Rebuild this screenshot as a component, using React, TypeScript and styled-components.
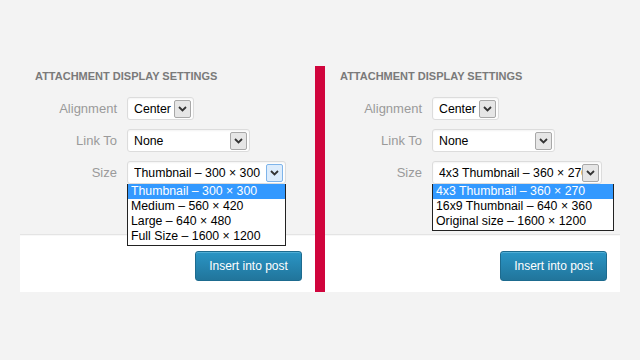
import React from 'react';
import styled, { createGlobalStyle } from 'styled-components';

const GlobalStyle = createGlobalStyle`
  html, body {
    margin: 0;
    padding: 0;
    background: #f3f3f3;
    font-family: Arial, "Liberation Sans", sans-serif;
  }
`;

const Page = styled.div`
  width: 640px;
  height: 360px;
  background: #f3f3f3;
  padding: 66px 20px 0;
  box-sizing: border-box;
`;

const Columns = styled.div`
  display: flex;
  align-items: stretch;
`;

const Panel = styled.section`
  width: 295px;
  display: flex;
  flex-direction: column;
`;

const Divider = styled.div`
  width: 10px;
  background: #d0043c;
`;

const Settings = styled.div`
  height: 168px;
  box-sizing: border-box;
  padding: 4px 0 0 15px;
  position: relative;
  z-index: 2;
`;

const Heading = styled.h3`
  margin: 0 0 14px;
  font-size: 11px;
  line-height: 13px;
  font-weight: bold;
  color: #7a7a7a;
  text-transform: uppercase;
`;

const Rows = styled.div`
  display: flex;
  flex-direction: column;
  gap: 9px;
`;

const Row = styled.div`
  display: flex;
  align-items: center;
  gap: 10px;
`;

const Label = styled.label`
  width: 82px;
  text-align: right;
  font-size: 13px;
  color: #9a9a9a;
`;

const SelectWrap = styled.div`
  position: relative;
`;

const Select = styled.div<{ $width: number }>`
  width: ${p => p.$width}px;
  height: 23px;
  box-sizing: border-box;
  background: #fff;
  border: 1px solid #dcdcdc;
  border-radius: 3px;
  box-shadow: inset 0 1px 2px rgba(0, 0, 0, 0.05);
  display: flex;
  align-items: center;
  padding: 0 2px 0 6px;
  font-size: 12.3px;
  color: #000;
  overflow: hidden;
`;

const Value = styled.span`
  flex: 1;
  min-width: 0;
  white-space: nowrap;
  overflow: hidden;
  text-overflow: clip;
`;

const ArrowBox = styled.span<{ $active?: boolean }>`
  flex: none;
  width: 17px;
  height: 18px;
  box-sizing: border-box;
  display: flex;
  align-items: center;
  justify-content: center;
  border: 1px solid ${p => (p.$active ? '#7eb4ea' : '#a8a8a8')};
  background: ${p => (p.$active ? '#dcecfc' : '#e6e6e6')};
  border-radius: 2px;
`;

const List = styled.ul<{ $width: number }>`
  position: absolute;
  top: 23px;
  left: 0;
  width: ${p => p.$width}px;
  box-sizing: border-box;
  margin: 0;
  padding: 0 0 1px;
  list-style: none;
  background: #fff;
  border: 1px solid #222;
  border-top: none;
`;

const Option = styled.li<{ $selected?: boolean }>`
  height: 15px;
  line-height: 15px;
  padding: 0 3px;
  font-size: 12.3px;
  white-space: nowrap;
  background: ${p => (p.$selected ? '#3399ff' : '#fff')};
  color: ${p => (p.$selected ? '#fff' : '#000')};
`;

const Footer = styled.div`
  height: 58px;
  background: #fff;
  border-top: 1px solid #e4e4e4;
  box-shadow: inset 0 1px 1px rgba(0, 0, 0, 0.03);
  display: flex;
  justify-content: flex-end;
  align-items: flex-start;
  padding: 16px 13px 0 0;
  box-sizing: border-box;
`;

const Button = styled.button`
  width: 107px;
  height: 30px;
  border: 1px solid #1d6b8f;
  border-radius: 3px;
  background: linear-gradient(to bottom, #2a95c5, #21759b);
  color: #fff;
  font-family: Arial, "Liberation Sans", sans-serif;
  font-size: 12px;
  box-shadow: inset 0 1px 0 rgba(120, 200, 230, 0.5);
  padding: 0;
`;

const Chevron = () => (
  <svg width="9" height="6" viewBox="0 0 9 6">
    <polyline points="1,1 4.5,4.5 8,1" fill="none" stroke="#333" strokeWidth="1.8" />
  </svg>
);

type Field = { label: string; value: string; width: number; active?: boolean; options?: string[]; listWidth?: number };

const SettingsPanel = ({ fields }: { fields: Field[] }) => (
  <Panel>
    <Settings>
      <Heading>Attachment Display Settings</Heading>
      <Rows>
        {fields.map(f => (
          <Row key={f.label}>
            <Label>{f.label}</Label>
            <SelectWrap>
              <Select $width={f.width}>
                <Value>{f.value}</Value>
                <ArrowBox $active={f.active}>
                  <Chevron />
                </ArrowBox>
              </Select>
              {f.options && (
                <List $width={f.listWidth ?? f.width}>
                  {f.options.map((o, i) => (
                    <Option key={o} $selected={i === 0}>{o}</Option>
                  ))}
                </List>
              )}
            </SelectWrap>
          </Row>
        ))}
      </Rows>
    </Settings>
    <Footer>
      <Button>Insert into post</Button>
    </Footer>
  </Panel>
);

export default function App() {
  return (
    <>
      <GlobalStyle />
      <Page>
        <Columns>
          <SettingsPanel
            fields={[
              { label: 'Alignment', value: 'Center', width: 67 },
              { label: 'Link To', value: 'None', width: 123 },
              {
                label: 'Size',
                value: 'Thumbnail – 300 × 300',
                width: 159,
                active: true,
                options: ['Thumbnail – 300 × 300', 'Medium – 560 × 420', 'Large – 640 × 480', 'Full Size – 1600 × 1200'],
              },
            ]}
          />
          <Divider />
          <SettingsPanel
            fields={[
              { label: 'Alignment', value: 'Center', width: 67 },
              { label: 'Link To', value: 'None', width: 123 },
              {
                label: 'Size',
                value: '4x3 Thumbnail – 360 × 270',
                width: 170,
                listWidth: 182,
                options: ['4x3 Thumbnail – 360 × 270', '16x9 Thumbnail – 640 × 360', 'Original size – 1600 × 1200'],
              },
            ]}
          />
        </Columns>
      </Page>
    </>
  );
}
